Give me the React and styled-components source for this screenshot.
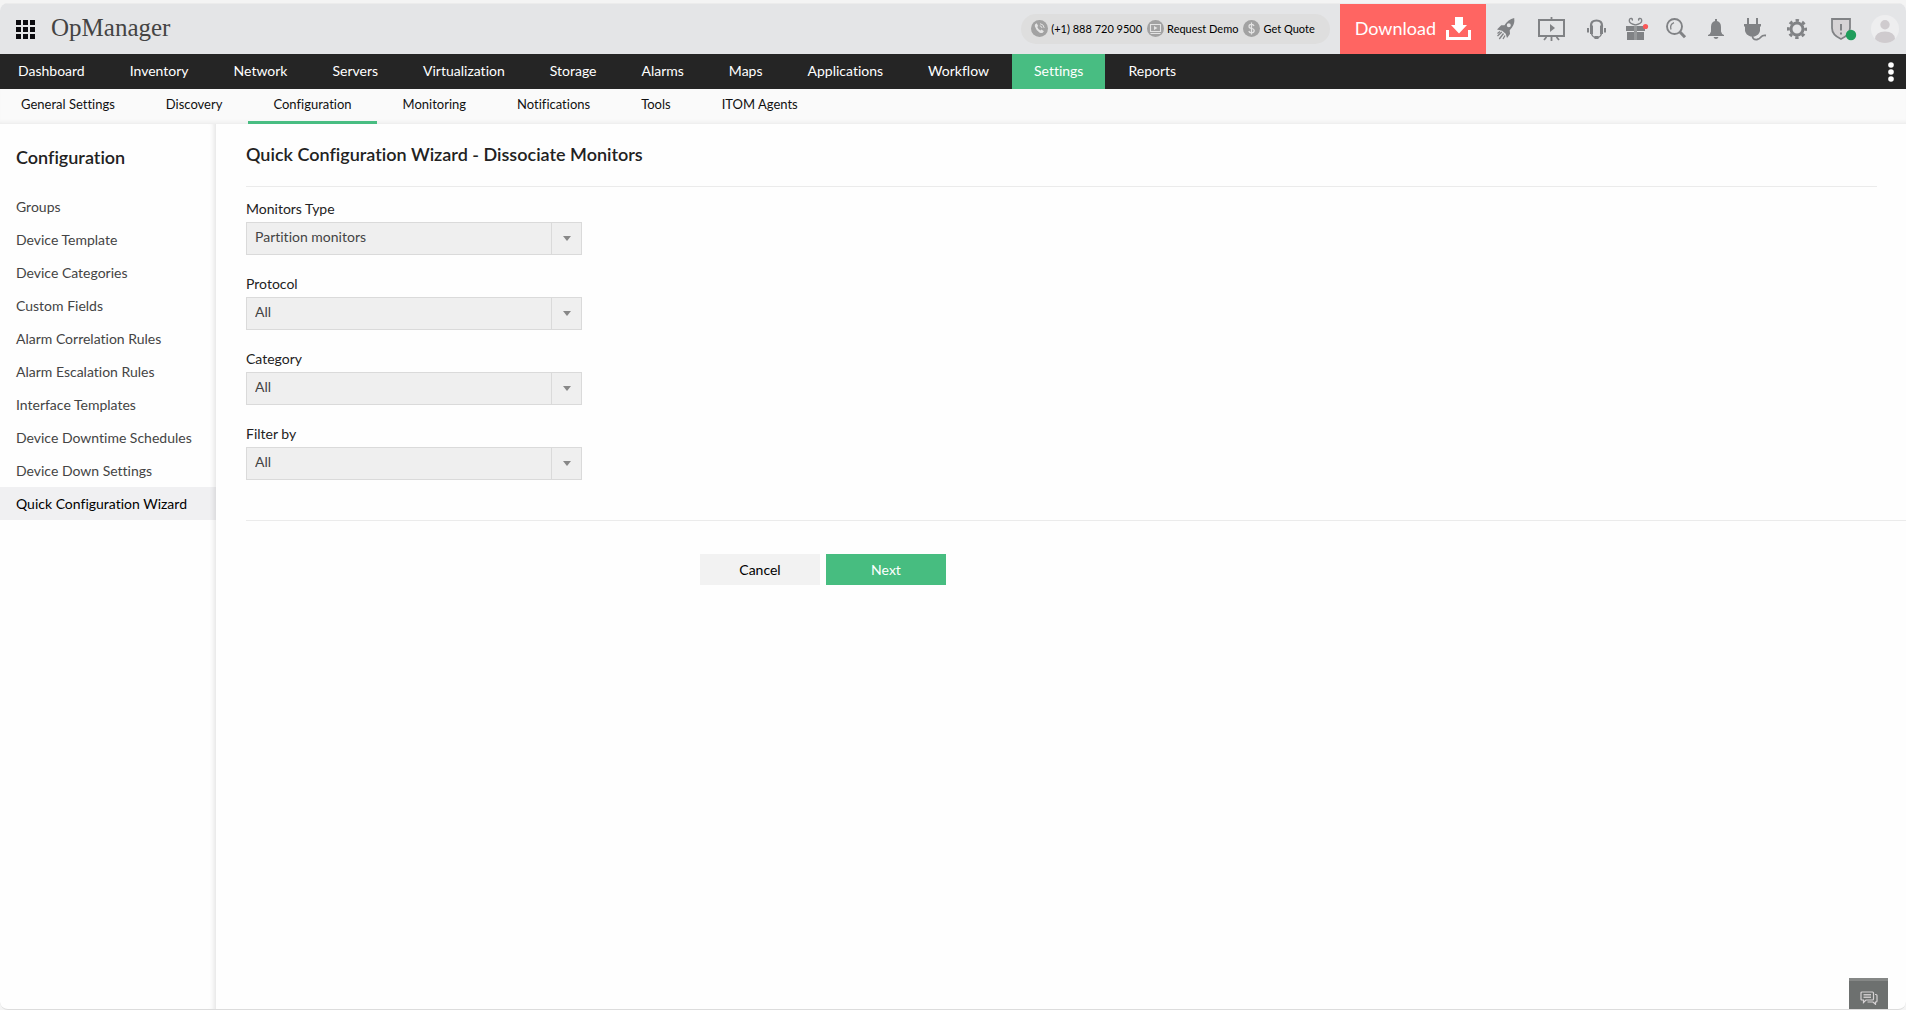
import React, { useState } from 'react';
import styled, { createGlobalStyle } from 'styled-components';

const NAV = [
  'Dashboard', 'Inventory', 'Network', 'Servers', 'Virtualization', 'Storage',
  'Alarms', 'Maps', 'Applications', 'Workflow', 'Settings', 'Reports',
];

const SUB_NAV = [
  'General Settings', 'Discovery', 'Configuration', 'Monitoring',
  'Notifications', 'Tools', 'ITOM Agents',
];

const SIDE_MENU = [
  'Groups', 'Device Template', 'Device Categories', 'Custom Fields',
  'Alarm Correlation Rules', 'Alarm Escalation Rules', 'Interface Templates',
  'Device Downtime Schedules', 'Device Down Settings', 'Quick Configuration Wizard',
];

const FIELDS = [
  { id: 'monitorsType', label: 'Monitors Type', options: ['Partition monitors'] },
  { id: 'protocol', label: 'Protocol', options: ['All'] },
  { id: 'category', label: 'Category', options: ['All'] },
  { id: 'filterBy', label: 'Filter by', options: ['All'] },
];

const App = () => {
  const [values, setValues] = useState({
    monitorsType: 'Partition monitors',
    protocol: 'All',
    category: 'All',
    filterBy: 'All',
  });

  const handleChange = (event) => {
    setValues({ ...values, [event.target.id]: event.target.value });
  };

  return (
    <>
      <GlobalStyle />
      <Frame>
        <Header />
        <NavBar>
          <NavList>
            {NAV.map((item) => (
              <NavLink key={item} href="#" $active={item === 'Settings'}>{item}</NavLink>
            ))}
          </NavList>
          <MoreButton aria-label="More">
            <svg width="6" height="20" viewBox="0 0 6 20" fill="#fff">
              <circle cx="3" cy="3" r="2.8" />
              <circle cx="3" cy="10" r="2.8" />
              <circle cx="3" cy="17" r="2.8" />
            </svg>
          </MoreButton>
        </NavBar>
        <SubNavBar>
          {SUB_NAV.map((item) => (
            <SubNavLink key={item} href="#" $active={item === 'Configuration'}>{item}</SubNavLink>
          ))}
        </SubNavBar>
        <Body>
          <Sidebar>
            <SidebarTitle>Configuration</SidebarTitle>
            {SIDE_MENU.map((item) => (
              <SidebarLink key={item} href="#" $active={item === 'Quick Configuration Wizard'}>
                {item}
              </SidebarLink>
            ))}
          </Sidebar>
          <Content>
            <PageTitle>Quick Configuration Wizard - Dissociate Monitors</PageTitle>
            <Fields>
              {FIELDS.map((field) => (
                <Field key={field.id}>
                  <Label htmlFor={field.id}>{field.label}</Label>
                  <SelectBox>
                    <Select id={field.id} value={values[field.id]} onChange={handleChange}>
                      {field.options.map((option) => (
                        <option key={option}>{option}</option>
                      ))}
                    </Select>
                    <SelectArrow>
                      <svg width="8" height="5" viewBox="0 0 8 5"><path d="M0 0h8L4 5z" fill="#888" /></svg>
                    </SelectArrow>
                  </SelectBox>
                </Field>
              ))}
            </Fields>
            <Actions>
              <Button type="button">Cancel</Button>
              <Button type="button" $primary>Next</Button>
            </Actions>
          </Content>
        </Body>
        <ChatButton aria-label="Chat">
          <svg width="18" height="14" viewBox="0 0 18 14" fill="none" stroke="#d6d2d4" strokeWidth="1.2">
            <path d="M2 1h10.500q1 0 1 1v6q0 1-1 1H6l-2.500 2.500V9H2q-1 0-1-1V2q0-1 1-1z" />
            <path d="M3.500 3.500h7.500M3.500 5h7.500M3.500 6.500h7.500" strokeWidth="0.9" />
            <path d="M15 3.500h1q1 0 1 1V10q0 1-1 1h-.500v2.300L13 11H7.500" />
          </svg>
        </ChatButton>
      </Frame>
    </>
  );
};

export default App;

function Header() {
  return (
    <TopBar>
      <AppsButton aria-label="Apps">
        <svg width="19" height="19" viewBox="0 0 19 19" fill="#0c0c10">
          {[0, 7, 14].map((y) => [0, 7, 14].map((x) => (
            <rect key={`${x}-${y}`} x={x} y={y} width="5" height="5" />
          )))}
        </svg>
      </AppsButton>
      <Brand>OpManager</Brand>
      <ContactPill>
        <ContactLink href="#">
          <svg width="17" height="17" viewBox="0 0 17 17">
            <circle cx="8.500" cy="8.500" r="8.500" fill="#a2a2a2" />
            <path d="M4.200 4.200l1.500-.900 1.500 2.600-1 1q1 2.300 3.200 3.600l1.200-.900 2.300 1.700-1.200 1.500q-1.200.800-3.300-.400Q4.900 9.900 3.900 6.500q-.300-1.500.300-2.300z" fill="#e4e4e4" />
            <path d="M8.800 5.800q1.900.200 2.200 2.200M9 3.700q3.700.400 4.200 4.200" fill="none" stroke="#e4e4e4" strokeWidth="1" />
          </svg>
          (+1) 888 720 9500
        </ContactLink>
        <ContactLink href="#">
          <svg width="17" height="17" viewBox="0 0 17 17">
            <circle cx="8.500" cy="8.500" r="8.500" fill="#a2a2a2" />
            <path d="M3.500 4.500h10v7h-10zM3.500 13.500h10" fill="none" stroke="#e4e4e4" strokeWidth="1.100" />
            <path d="M7 6l3.500 2L7 10z" fill="#e4e4e4" />
          </svg>
          Request Demo
        </ContactLink>
        <ContactLink href="#">
          <svg width="17" height="17" viewBox="0 0 17 17">
            <circle cx="8.500" cy="8.500" r="8.500" fill="#a2a2a2" />
            <path d="M11 6Q10.500 4.300 8.500 4.300 6 4.300 6 6.300T8.500 8.500Q11.200 8.800 11.200 10.700T8.500 12.800Q6.200 12.800 5.800 11M8.500 2.500v12" fill="none" stroke="#e4e4e4" strokeWidth="1.200" />
          </svg>
          Get Quote
        </ContactLink>
      </ContactPill>
      <Download href="#">
        Download
        <svg width="25" height="23" viewBox="0 0 25 23">
          <path d="M9 0h8v8h4l-8 8.500L5 8h4z" fill="#fff" />
          <path d="M1.500 13v8.500h22V13" fill="none" stroke="#fff" strokeWidth="3" />
        </svg>
      </Download>
      <Tools>
        <IconButton aria-label="Getting started">
          <svg width="22" height="22" viewBox="0 0 22 22">
            <path fillRule="evenodd" d="M18.200 0Q19 5.500 16 9.500l-2.300 2.700.3 3.800-3 4-1.300-4.300-3.600-3L1 11.500l4.200-4.300 3.300.100Q12 1.500 18.200 0zM12.800 5.200a2 2 0 1 0 0 4 2 2 0 0 0 0-4z" fill="#808285" />
            <path d="M5.800 14L1.500 18M7.500 15.500L3.300 21M9 17.500L7 21M4 13.500L1.500 15.500" stroke="#808285" strokeWidth="1.300" />
          </svg>
        </IconButton>
        <IconButton aria-label="Demo video">
          <svg width="29" height="24" viewBox="0 0 29 24">
            <path d="M1 3h25v16H1z" fill="none" stroke="#808285" strokeWidth="2" />
            <path d="M12 7l5 4-5 4z" fill="#808285" />
            <path d="M13.500 0v2M13.500 20v5M8.500 20l-2.500 3M18.500 20l2.500 3" stroke="#808285" strokeWidth="1.800" />
          </svg>
        </IconButton>
        <IconButton aria-label="Support">
          <svg width="19" height="20" viewBox="0 0 19 20">
            <path d="M4 8V6.500Q4 1.500 9.500 1.500T15 6.500V8" fill="none" stroke="#808285" strokeWidth="2.200" />
            <path d="M3 6.500h3V15H3zM13 6.500h3V15h-3zM0 9h2v4.500H0zM17 9h2v4.500h-2zM7.500 17h4v3h-4z" fill="#808285" />
            <path d="M4.500 14.500q.500 3 3.500 4M14.500 14.500q-.500 3-3.500 4" fill="none" stroke="#808285" strokeWidth="1.400" />
          </svg>
        </IconButton>
        <IconButton aria-label="What's new">
          <svg width="20" height="24" viewBox="0 0 20 24" overflow="visible">
            <path d="M9.500 8Q3 6.500 3.300 3.500 3.500 1 5.500 1.500 7 2.200 6 3.500M9.500 8Q16 6.500 15.700 3.500 15.500 1 13.500 1.500 12 2.200 13 3.500" fill="none" stroke="#808285" strokeWidth="1.400" />
            <path d="M0 9h8v5H0zM11 9h8v5h-8zM1 15h7v8H1zM11 15h7v8h-7z" fill="#808285" />
            <path d="M8 9h3v14H8z" fill="#97999b" />
            <circle cx="19.500" cy="9.500" r="2.600" fill="#f95858" />
          </svg>
        </IconButton>
        <IconButton aria-label="Search">
          <svg width="22" height="22" viewBox="0 0 22 22" fill="none" stroke="#808285">
            <circle cx="8.500" cy="8.500" r="7.500" strokeWidth="1.900" />
            <path d="M5 11.500Q3.500 6.500 8 4.700" strokeWidth="1.300" />
            <path d="M13.500 13.500l5.500 5.800" strokeWidth="3" />
          </svg>
        </IconButton>
        <IconButton aria-label="Alarms">
          <svg width="16" height="20" viewBox="0 0 16 20" fill="#808285">
            <path d="M7 0h2v2q4 1 4 6v4.500q.500 2.500 3 3.500v1H0v-1q2.500-1 3-3.500V8q0-5 4-6zM5.500 18h5q-.700 2-2.500 2t-2.500-2z" />
          </svg>
        </IconButton>
        <IconButton aria-label="Plugins">
          <svg width="23" height="23" viewBox="0 0 23 23">
            <path d="M4 0v7M13 0v7" stroke="#808285" strokeWidth="2" />
            <path d="M0 6h17v2l-1 1v4q-1 4-5.500 5.500h-4Q2 17 1 13V9L0 8z" fill="#808285" />
            <path d="M8.500 18q0 4 4.500 3.500 2.500-.500 4-2.500t5-1.500" fill="none" stroke="#808285" strokeWidth="1.800" />
          </svg>
        </IconButton>
        <IconButton aria-label="Settings">
          <svg width="24" height="20" viewBox="0 0 24 20" fill="none" stroke="#808285">
            <circle cx="10" cy="10" r="6" strokeWidth="3" />
            <circle cx="10" cy="10" r="8.600" strokeWidth="2.800" strokeDasharray="3.400 3.354" strokeDashoffset="1.700" />
          </svg>
        </IconButton>
        <IconButton aria-label="Security">
          <svg width="20" height="22" viewBox="0 0 20 22" overflow="visible">
            <path d="M1 1h18v9q0 7-9 11-9-4-9-11z" fill="#d6d3d5" stroke="#808285" strokeWidth="1.800" />
            <path d="M9 6h2v6.500H9zM9 14.500h2v2H9z" fill="#808285" />
            <circle cx="20" cy="17" r="5.200" fill="#1f9d5b" />
          </svg>
        </IconButton>
        <IconButton aria-label="Profile">
          <svg width="28" height="28" viewBox="0 0 28 28">
            <circle cx="14" cy="14" r="14" fill="#eeeeef" />
            <circle cx="14" cy="9.800" r="4.700" fill="#cfcbce" />
            <path d="M4 24Q4.500 16.500 14 16.500T24 24q-4 4-10 4T4 24z" fill="#cfcbce" />
          </svg>
        </IconButton>
      </Tools>
    </TopBar>
  );
}

const GlobalStyle = createGlobalStyle`
  * {
    box-sizing: border-box;
  }

  body {
    margin: 0;
    background: #f4f4f4;
    font-family: Lato, 'Liberation Sans', sans-serif;
    font-size: 14px;
    font-variant-ligatures: none;
    color: #222;
  }

  a {
    text-decoration: none;
    color: inherit;
  }

  button,
  select {
    font-family: inherit;
    font-variant-ligatures: none;
    cursor: pointer;
  }

  svg {
    display: block;
    flex: none;
  }
`;

const Frame = styled.div`
  display: flex;
  flex-direction: column;
  min-height: calc(100vh - 3px);
  margin-top: 3px;
  border-bottom: 1px solid #dcdcdc;
  border-radius: 8px;
  background: #fefefe;
  overflow: hidden;
`;

const TopBar = styled.header`
  display: flex;
  align-items: center;
  height: 51px;
  padding: 0 7px 0 16px;
  border-top: 1px solid #ececec;
  background: #e4e5e7;
`;

const AppsButton = styled.button`
  padding: 0;
  border: 0;
  background: none;
`;

const Brand = styled.span`
  margin-left: 16px;
  padding-bottom: 2px;
  font-family: 'Roboto Slab', 'Liberation Serif', serif;
  font-size: 25px;
  font-weight: 300;
  line-height: 32px;
  color: #444;
`;

const ContactPill = styled.div`
  display: flex;
  align-items: center;
  gap: 5px;
  height: 30px;
  margin-left: auto;
  padding: 0 15px 2px 10px;
  border-radius: 15px;
  background: #dedede;
`;

const ContactLink = styled.a`
  display: flex;
  align-items: center;
  gap: 3px;
  font-size: 11px;
  color: #000;
  white-space: nowrap;
`;

const Download = styled.a`
  display: flex;
  align-items: center;
  gap: 10px;
  align-self: stretch;
  margin: 0 10px;
  padding: 0 15px 2px;
  background: #ff6562;
  font-size: 18px;
  color: #fff;
`;

const Tools = styled.div`
  display: flex;
  align-items: center;
  gap: 20px;
`;

const IconButton = styled.button`
  padding: 0;
  border: 0;
  background: none;
`;

const NavBar = styled.nav`
  display: flex;
  justify-content: space-between;
  height: 35px;
  padding-right: 12px;
  background: #252525;
`;

const NavList = styled.div`
  display: flex;
  gap: 1px;
`;

const NavLink = styled.a`
  padding: 0 22px;
  background: ${({ $active }) => ($active ? '#48bd82' : 'transparent')};
  font-size: 14px;
  line-height: 34px;
  color: #fff;

  &:first-child {
    padding-left: 18px;
  }
`;

const MoreButton = styled.button`
  padding: 0;
  border: 0;
  background: none;
`;

const SubNavBar = styled.nav`
  display: flex;
  gap: 1px;
  height: 35px;
  background: #fafafa;
  box-shadow: inset 0 -4px 4px -3px #e8e8e8;
`;

const SubNavLink = styled.a`
  padding: 0 25px;
  border-bottom: 3px solid ${({ $active }) => ($active ? '#48bd82' : 'transparent')};
  font-size: 13px;
  line-height: 30px;
  color: #111;

  &:first-child {
    padding-left: 21px;
  }
`;

const Body = styled.div`
  display: flex;
  flex: 1;
`;

const Sidebar = styled.aside`
  flex: none;
  width: 216px;
  box-shadow: inset -6px 0 5px -4px #e4e4e4;
`;

const SidebarTitle = styled.h2`
  margin: 0;
  padding: 21px 16px;
  font-size: 18px;
  font-weight: 600;
  line-height: 24px;
`;

const SidebarLink = styled.a`
  display: block;
  padding: 0 16px;
  background: ${({ $active }) => ($active ? 'rgba(20, 20, 50, 0.06)' : 'transparent')};
  line-height: 33px;
  color: ${({ $active }) => ($active ? '#000' : '#444')};
  white-space: nowrap;
`;

const Content = styled.main`
  flex: 1;
  padding-left: 30px;
`;

const PageTitle = styled.h1`
  margin: 0 29px 0 0;
  padding: 18px 0 20px;
  border-bottom: 1px solid #ebebeb;
  font-size: 18px;
  font-weight: 600;
  line-height: 24px;
`;

const Fields = styled.form`
  display: flex;
  flex-direction: column;
  gap: 20px;
  padding: 13px 0 40px;
  border-bottom: 1px solid #ebebeb;
`;

const Field = styled.div`
  width: 336px;
`;

const Label = styled.label`
  display: block;
  line-height: 18px;
  padding-bottom: 4px;
`;

const SelectBox = styled.div`
  display: flex;
  position: relative;
`;

const Select = styled.select`
  width: 100%;
  height: 33px;
  padding: 0 38px 4px 8px;
  border: 1px solid #dadada;
  border-radius: 0;
  appearance: none;
  background: #efefef;
  font-size: 14px;
  color: #444;
`;

/* Sits over the right edge of the native select */
const SelectArrow = styled.span`
  display: flex;
  align-items: center;
  justify-content: center;
  position: absolute;
  top: 0;
  right: 0;
  bottom: 0;
  width: 31px;
  border-left: 1px solid #dadada;
  pointer-events: none;
`;

const Actions = styled.div`
  display: flex;
  justify-content: center;
  gap: 6px;
  max-width: 1154px;
  padding-top: 33px;
`;

const Button = styled.button`
  width: 120px;
  height: 31px;
  border: 0;
  background: ${({ $primary }) => ($primary ? '#47bd80' : '#f2f2f2')};
  font-size: 14px;
  color: ${({ $primary }) => ($primary ? '#fff' : '#000')};
`;

const ChatButton = styled.button`
  display: flex;
  align-items: center;
  justify-content: center;
  position: fixed;
  right: 18px;
  bottom: 1px;
  width: 39px;
  height: 31px;
  padding: 6px 0 0;
  border: 0;
  border-top: 3px solid #858786;
  background: #6d706f;
`;
